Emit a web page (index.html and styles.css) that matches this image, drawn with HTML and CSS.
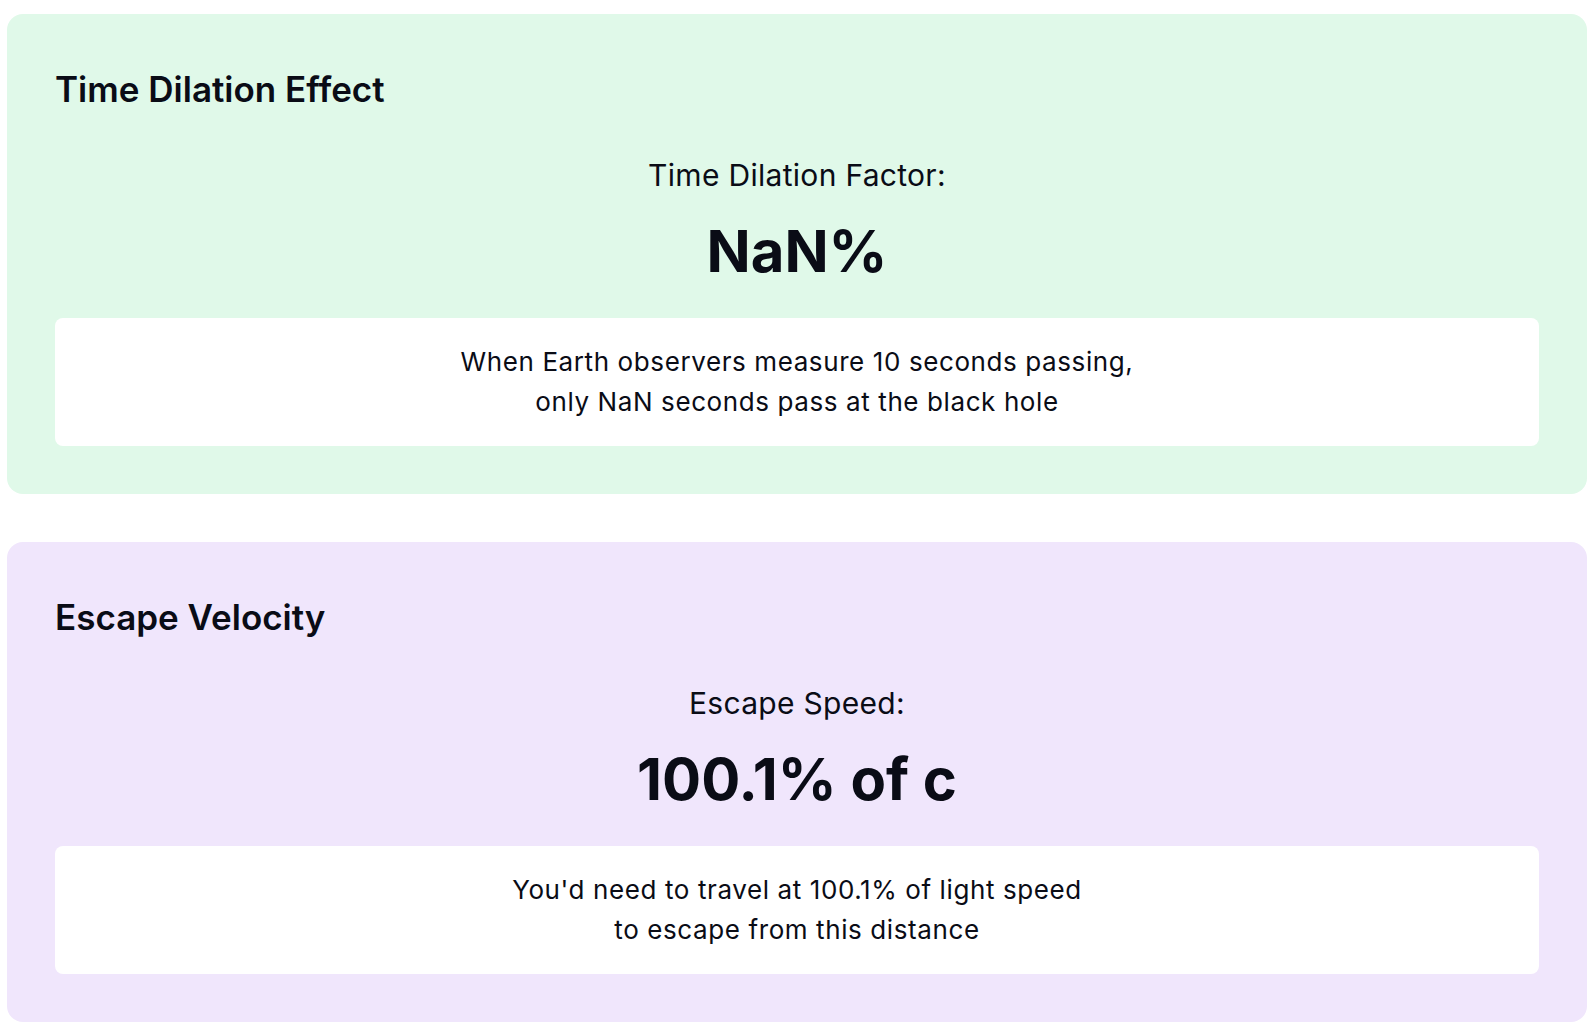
FILE: index.html
```html
<!DOCTYPE html>
<html lang="en">
<head>
<meta charset="utf-8">
<title>Black Hole Effects</title>
<link rel="stylesheet" href="styles.css">
</head>
<body>
<main class="stack">
  <section class="card card-green">
    <h2 class="card-title">Time Dilation Effect</h2>
    <div class="metric">
      <p class="metric-label">Time Dilation Factor:</p>
      <p class="metric-value">NaN%</p>
    </div>
    <div class="note">
      <p>When Earth observers measure 10 seconds passing,<br>only NaN seconds pass at the black hole</p>
    </div>
  </section>
  <section class="card card-purple">
    <h2 class="card-title">Escape Velocity</h2>
    <div class="metric">
      <p class="metric-label">Escape Speed:</p>
      <p class="metric-value">100.1% of c</p>
    </div>
    <div class="note">
      <p>You'd need to travel at 100.1% of light speed<br>to escape from this distance</p>
    </div>
  </section>
</main>
</body>
</html>
```

FILE: styles.css
```css
* { box-sizing: border-box; }
html, body { background: #ffffff; }
body {
  margin: 14px 9px 8px 7px;
  font-family: Inter, "Noto Sans", "Liberation Sans", sans-serif;
  color: #0a0c16;
}
p, h2 { margin: 0; }
.stack {
  display: flex;
  flex-direction: column;
  gap: 48px;
}
.card {
  border-radius: 16px;
  padding: 55px 48px 48px;
  display: flex;
  flex-direction: column;
}
.card-green { background: #e0f9e9; }
.card-purple { background: #f0e6fc; }
.card-title {
  font-size: 35px;
  line-height: 40px;
  font-weight: 600;
}
.metric {
  margin-top: 48px;
  text-align: center;
  display: flex;
  flex-direction: column;
  gap: 26px;
}
.metric-label {
  font-size: 30px;
  line-height: 36px;
  font-weight: 400;
  letter-spacing: 0.3px;
}
.metric-value {
  font-size: 58px;
  line-height: 64px;
  font-weight: 700;
}
.note {
  margin-top: 35px;
  background: #ffffff;
  border-radius: 8px;
  padding: 24px;
  text-align: center;
  font-size: 26px;
  line-height: 40px;
  letter-spacing: 0.6px;
}
```
